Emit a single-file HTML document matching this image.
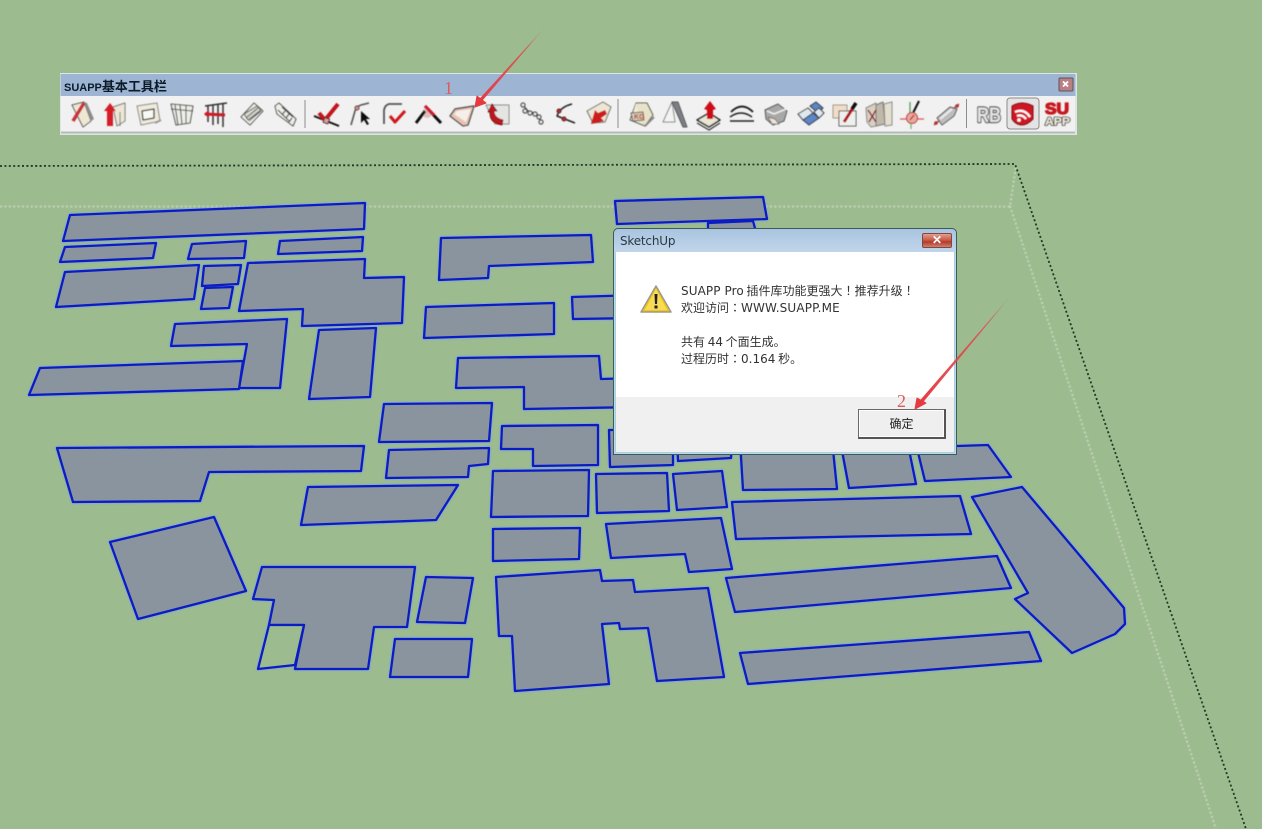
<!DOCTYPE html>
<html><head><meta charset="utf-8">
<style>
html,body{margin:0;padding:0;background:#9cbb8f;}
body{width:1262px;height:829px;position:relative;overflow:hidden;font-family:"Liberation Sans","Noto Sans CJK SC",sans-serif;}
svg{position:absolute;left:0;top:0;}
.t{position:absolute;white-space:nowrap;}
#dlg{position:absolute;left:613px;top:228px;width:344px;height:227px;box-sizing:border-box;border:1px solid #3c5a5c;border-radius:5px 5px 0 0;background:linear-gradient(#a9c4e0,#c2d6ea 24px);overflow:hidden;}
#dlg .in{position:absolute;left:1px;right:1px;top:23px;bottom:1px;background:#fff;border:1px solid #9fd4e0;border-top:0;box-sizing:border-box;}
#dlg .ft{position:absolute;left:0;right:0;top:145px;bottom:0;background:#f0f0f0;}
#dlg .x{position:absolute;left:308px;top:4px;width:30px;height:15px;box-sizing:border-box;border:1px solid #7b4a45;border-radius:2px;background:linear-gradient(#e0a090,#c8543f 50%,#b23a2a 60%,#d08070);color:#fff;font:bold 12px/13px "Liberation Sans",sans-serif;text-align:center;}
#btn{position:absolute;left:858px;top:409px;width:88px;height:30px;box-sizing:border-box;border:1px solid #6a6a6a;border-right:2px solid #555;border-bottom:2px solid #555;background:#efefef;box-shadow:inset 0 0 0 1px #fdfdfd;text-align:center;font:12px/27px "Noto Sans CJK SC",sans-serif;color:#222;}
.m{font:12px/17px "Noto Sans CJK SC",sans-serif;color:#333;left:681px;}
.m b{font:12px/17px "DejaVu Sans",sans-serif;}
.m i{font:12px/17px "Noto Sans CJK TC",sans-serif;}
</style></head><body>

<svg width="1262" height="829" viewBox="0 0 1262 829">
<defs>
<filter id="b"><feGaussianBlur stdDeviation=".45"/></filter>
<linearGradient id="a1" gradientUnits="userSpaceOnUse" x1="546" y1="26" x2="476" y2="107"><stop offset="0" stop-color="#e04a50" stop-opacity="0"/><stop offset=".25" stop-color="#e04a50" stop-opacity=".85"/><stop offset="1" stop-color="#e53a40"/></linearGradient>
<linearGradient id="a2" gradientUnits="userSpaceOnUse" x1="1014" y1="292" x2="916" y2="408"><stop offset="0" stop-color="#e04a50" stop-opacity="0"/><stop offset=".25" stop-color="#e04a50" stop-opacity=".85"/><stop offset="1" stop-color="#e53a40"/></linearGradient>
<g id="faces">
<path d="M70 215L365 203L364 229L63 241Z"/>
<path d="M65 247L156 243L153 258L60 262Z"/>
<path d="M192 244L246 241L244 258L188 259Z"/>
<path d="M280 241L363 237L362 251L278 254Z"/>
<path d="M65 272L199 265L194 299L56 307Z"/>
<path d="M204 266L241 265L238 284L202 286Z"/>
<path d="M205 288L233 287L229 308L201 309Z"/>
<path d="M248 263L365 259L364 278L404 277L402 323L302 326L303 309L239 311Z"/>
<path d="M175 324L287 319L280 388L239 388L247 344L171 346Z"/>
<path d="M40 368L243 361L239 389L29 395Z"/>
<path d="M319 330L376 328L370 397L309 399Z"/>
<path d="M708 223L753 221L756 232L708 232Z"/>
<path d="M615 201L763 197L767 219L617 224Z"/>
<path d="M441 238L591 235L593 262L489 266L488 278L439 280Z"/>
<path d="M426 307L554 303L554 334L424 338Z"/>
<path d="M572 297L640 295L640 318L573 319Z"/>
<path d="M458 358L599 356L601 379L640 378L640 407L524 409L524 387L456 388Z"/>
<path d="M384 404L492 403L489 441L379 442Z"/>
<path d="M502 426L598 425L598 465L533 466L533 449L501 449Z"/>
<path d="M389 450L489 448L488 464L469 466L468 477L386 478Z"/>
<path d="M493 471L589 470L588 516L491 517Z"/>
<path d="M596 474L667 473L669 511L597 513Z"/>
<path d="M673 474L722 471L727 507L677 510Z"/>
<path d="M609 430L673 430L673 465L610 467Z"/>
<path d="M677 440L732 440L731 458L678 461Z"/>
<path d="M57 448L364 446L361 471L209 472L200 501L73 502Z"/>
<path d="M308 487L458 485L436 520L301 525Z"/>
<path d="M110 542L214 517L246 591L138 619Z"/>
<path d="M262 567L415 567L407 627L374 627L368 669L295 669L304 625L269 625L274 600L253 599Z"/>
<path d="M269 625L258 669L295 665L304 625Z" fill="#9cbb8f"/>
<path d="M426 577L473 578L465 623L417 622Z"/>
<path d="M395 639L472 639L468 677L390 677Z"/>
<path d="M493 529L580 528L579 559L493 561Z"/>
<path d="M606 524L721 518L732 569L689 572L685 554L611 558Z"/>
<path d="M496 577L600 570L602 581L633 580L635 592L708 588L724 677L657 681L648 628L620 629L619 623L602 624L609 684L515 691L512 636L499 636Z"/>
<path d="M740 440L832 440L837 489L743 490Z"/>
<path d="M840 440L907 440L916 484L849 488Z"/>
<path d="M915 440L957 446L988 445L1011 477L925 481Z"/>
<path d="M732 502L960 496L971 534L736 539Z"/>
<path d="M972 497L1022 487L1124 608L1125 624L1115 634L1072 653L1015 599L1028 593Z"/>
<path d="M726 578L997 556L1011 588L735 612Z"/>
<path d="M740 653L1029 632L1041 661L748 684Z"/>
</g>
</defs>

<!-- guide lines -->
<g fill="none" stroke-linecap="butt">
<path d="M0 206.5 H1010 L1016 166 M1010 206 L1216 829" stroke="#c6d6bb" stroke-width="2" stroke-dasharray="2 2.4" filter="url(#b)"/>
<path d="M0 166 L1015 164 L1246 829" stroke="#1e3a26" stroke-width="1.800" stroke-dasharray="2 2.4"/>
</g>

<!-- building faces -->
<g fill="#8a949e" stroke="#7f9fe6" stroke-width="4.500" stroke-linejoin="round" opacity=".55" filter="url(#b)"><use href="#faces"/></g>
<g fill="#8a949e" stroke="#0a1cc4" stroke-width="2.300" stroke-linejoin="round"><use href="#faces"/></g>

<!-- toolbar -->
<rect x="60" y="73" width="1017" height="62" fill="#dfe4e4"/>
<rect x="60.5" y="74" width="1015" height="22" fill="#9db5d2"/>
<rect x="61" y="96" width="1014" height="36" fill="#f1f1f1"/>
<rect x="61" y="131.500" width="1014" height="2" fill="#b6bbb9"/>
<rect x="1059" y="78" width="14" height="13" rx="1" fill="#b97f82" stroke="#5f5458"/>
<path d="M1063 81.500l5 5m0-5l-5 5" stroke="#fff" stroke-width="1.800"/>
<path d="M305 100V128M618 99V128M966.500 99V128" stroke="#8d8d8d" stroke-width="1"/>
<rect x="1007" y="98" width="32" height="31" rx="3" fill="#e4e4e4" stroke="#8b8b8b"/>

<g filter="url(#b)" stroke-linejoin="round">
<!-- 1 -->
<g transform="translate(81,114)"><path d="M-9-9L3-12L10 7L2 13Z" fill="#eee7d2" stroke="#555" stroke-width="1"/><path d="M3-12L10 7L13 5L6-11Z" fill="#8c8c8c"/><path d="M-8 7L3-11" stroke="#c8323c" stroke-width="3.500"/></g>
<!-- 2 -->
<g transform="translate(115,114)"><path d="M-2-7L10-11V7L2 12Z" fill="#ece6d6" stroke="#777"/><path d="M5-2V12" stroke="#777"/><path d="M-5-11L-11-3H-8V12H-2V-3H1Z" fill="#d61f26"/></g>
<!-- 3 -->
<g transform="translate(148,114)"><path d="M-11-8L9-11L12 7L-7 11Z" fill="#efeada" stroke="#888"/><path d="M-6-3L6-5V4L-5 6Z" fill="#f8f8f4" stroke="#333" stroke-width="1.300"/><path d="M7 9L13 6" stroke="#999" stroke-width="2"/></g>
<!-- 4 -->
<g transform="translate(182,114)" fill="none" stroke="#555" stroke-width="1.100"><path d="M-11-10L11-8L8 9L-6 11Z" fill="#eeeee8"/><path d="M-11-5L11-3M-7-9L-4 11M-2-9L0 10M4-9L4 10"/></g>
<!-- 5 -->
<g transform="translate(216,114)" fill="none"><path d="M-11-8L11-11M-8-8V8M-3-9V11M2-10V10M7-10V13" stroke="#333" stroke-width="1.500"/><path d="M-11 0L9 1" stroke="#c81e28" stroke-width="3"/><path d="M-12 0L-7-4V4Z" fill="#c81e28"/></g>
<!-- 6 -->
<g transform="translate(251,114)" fill="#efefe8" stroke="#555"><path d="M-10 3L3-11L12-3L-1 11Z"/><path d="M-7 0L6-8L10-4L-3 6Z" fill="#d8d8d0"/><path d="M-5 4L7-6M-2 7L10-3" fill="none"/></g>
<!-- 7 -->
<g transform="translate(285,114)" fill="none" stroke="#444"><path d="M-10-8L-6-11L11 5L8 12L-8 0Z" fill="#efefea"/><path d="M-7-4L4 7M-3-7L8 3M-3 1L0-3M1 4L4 0M4 8L7 4" stroke-width="1.200"/></g>
<!-- 8 -->
<g transform="translate(326,114)" fill="none"><path d="M-12 2L13 12" stroke="#111" stroke-width="1.800"/><path d="M-7-1L-1 6L12-10" stroke="#c1191f" stroke-width="4"/><rect x="-2" y="4" width="5" height="5" fill="#d79f9f" stroke="#602020" transform="rotate(20 0 6)"/></g>
<!-- 9 -->
<g transform="translate(360,114)" fill="none"><path d="M-9 11L-5-3Q-3-8 1-9L9-11" stroke="#555" stroke-width="1.600"/><circle cx="-3" cy="-6" r="2" fill="#c99" stroke="#633"/><path d="M1-3V9L4 6L7 11L9 10L6 5L10 5Z" fill="#111"/></g>
<!-- 10 -->
<g transform="translate(394,114)" fill="none"><path d="M-10 10V-4Q-9-9-5-10H8" stroke="#555" stroke-width="1.800"/><path d="M-4 2L1 8L11-3" stroke="#d0141c" stroke-width="3"/></g>
<!-- 11 -->
<g transform="translate(428,114)" fill="none"><circle cx="-1" cy="-1" r="5" fill="#e3bcbc"/><path d="M-12 9L-3-3" stroke="#111" stroke-width="3"/><path d="M-3-8L13 9" stroke="#111" stroke-width="3"/><path d="M-3-8L6 1" stroke="#d4142a" stroke-width="3"/></g>
<!-- 12 -->
<g transform="translate(462,115)"><path d="M-12 1L-7-6L12-9L6 10L1 11Z" fill="#e8c3b4" stroke="#555" stroke-width="1.400"/><path d="M-8-1L-5-4L9-6L4 7Z" fill="#f6efe9"/></g>
<!-- 13 -->
<g transform="translate(497,114)"><path d="M-11-9H12V10H-2Z" fill="#e4e4e0" stroke="#888"/><path d="M-9-2L-5-10L0-3H-3Q-3 4 6 6L5 11Q-8 9-7-2Z" fill="#c0131c" stroke="#600" stroke-width=".7"/></g>
<!-- 14 -->
<g transform="translate(531,114)" fill="#eee" stroke="#444" stroke-width="1.200"><path d="M-8-9L-3-3L6 0L10 7" fill="none"/><circle cx="-8" cy="-9" r="2"/><circle cx="-6" cy="-3" r="2"/><circle cx="-1" cy="-1" r="2"/><circle cx="4" cy="0" r="2"/><circle cx="8" cy="3" r="2"/><circle cx="10" cy="8" r="2"/></g>
<!-- 15 -->
<g transform="translate(565,114)" fill="none"><path d="M7-10Q-5-7-8 2L10 9" stroke="#222" stroke-width="1.500"/><circle cx="-6" cy="-3" r="2" fill="#a33" stroke="#622"/><circle cx="-1" cy="5" r="2" fill="#a33" stroke="#622"/></g>
<!-- 16 -->
<g transform="translate(599,114)"><path d="M-12-3L4-12L12-7L6 8L-6 9Z" fill="#ede6d4" stroke="#666"/><path d="M6-4L-1-1L-4-4L-8 10L5 7L2 4L8 0Z" fill="#cc1a1c"/></g>
<!-- 17 -->
<g transform="translate(641,114)"><path d="M-5-11H6L12 1L4 12L-11 6Z" fill="#e8e2c8" stroke="#555"/><path d="M-9 3L-5-11L-2 5Z" fill="#f2ecd6"/><path d="M-10-1L2-2L3 6L-8 7Z" fill="#d6d0b8" stroke="#666"/><text x="-7" y="5" font-size="7" font-weight="bold" fill="#c01818" font-family="Liberation Sans">KG</text><path d="M4 12L13 3" stroke="#888" stroke-width="2"/></g>
<!-- 18 -->
<g transform="translate(675,114)"><path d="M-12 8L-3-12L0 8Z" fill="#f3f3f3" stroke="#888"/><path d="M-3-12L3-12L12 13L8 13Z" fill="#7b8086" stroke="#555"/></g>
<!-- 19 -->
<g transform="translate(709,115)"><path d="M-12 5L0-2L11 5L0 12Z" fill="#eae6d4" stroke="#222" stroke-width="1.500"/><path d="M-12 8L0 15L11 8" fill="none" stroke="#333" stroke-width="1.200"/><path d="M1-14L-5-6L-2-5V4H4V-5L7-6Z" fill="#cc1016"/></g>
<!-- 20 -->
<g transform="translate(742,114)" fill="none"><path d="M-11-2Q0-13 11-2" stroke="#222" stroke-width="1.800"/><path d="M-12 7H12M-12 3Q-1-5 10 3" stroke="#222" stroke-width="1.500"/></g>
<!-- 21 -->
<g transform="translate(776,114)"><path d="M-11-4L2-10L11-3L8 7L-3 11L-10 5Z" fill="#a8a8a8" stroke="#555"/><path d="M-9-3L-2 0L10-5" fill="none" stroke="#eee" stroke-width="1.500"/><path d="M-8 3L-1 5L3 10L-4 10Z" fill="#f0e4d6" stroke="#777"/></g>
<!-- 22 -->
<g transform="translate(811,114)" stroke="#333"><path d="M-13 0L-3-6L2-1L-8 6Z" fill="#dfe7ef"/><path d="M-1-8L5-12L12-6L7-1Z" fill="#5b86c8"/><path d="M-8 6L2-1L8 4L-2 11Z" fill="#5b86c8"/><path d="M3-2L8-6L13-1L8 4Z" fill="#dfe7ef"/></g>
<!-- 23 -->
<g transform="translate(845,114)"><rect x="-12" y="-9" width="14" height="13" fill="#f0dcc8" stroke="#998"/><rect x="-6" y="-3" width="17" height="15" fill="#eef0ee" stroke="#555"/><path d="M-1 8L8-6" stroke="#b01018" stroke-width="3"/><path d="M7-5L11-11" stroke="#111" stroke-width="3.500"/></g>
<!-- 24 -->
<g transform="translate(879,114)"><path d="M-13-6L-3-11V12L-8 13L-12 8Z" fill="#d8d0c0" stroke="#888"/><path d="M-3-9L4-12L6 10L-3 12Z" fill="#c0b8a8" stroke="#777"/><path d="M5-10L13-12V11L6 12Z" fill="#e4dece" stroke="#888"/><path d="M-11-4L-3 8M-3-4L-10 8" stroke="#8a2a3a" stroke-width="1.500"/></g>
<!-- 25 -->
<g transform="translate(912,115)" fill="none"><path d="M-12 4H12" stroke="#e05555" stroke-width="1.300"/><path d="M-1 8V14" stroke="#6dbb6d" stroke-width="1.300"/><path d="M0 0L7-14" stroke="#111" stroke-width="2"/><path d="M-2-13V-1" stroke="#5a9a5a" stroke-width="1.300"/><circle cx="0" cy="3" r="5.500" fill="#e8a8a0" stroke="#b84838"/><path d="M-2 5L2 0" stroke="#b02020" stroke-width="1.200"/></g>
<!-- 26 -->
<g transform="translate(947,115)"><path d="M-13 10L12-11" stroke="#d24048" stroke-width="1.500"/><path d="M-10 3L3-8L10-6L7 1L-5 10Z" fill="#bdbdbd" stroke="#555"/><path d="M-7 4L5-6" stroke="#eee" stroke-width="2"/><circle cx="10" cy="-9" r="1.800" fill="#a33"/><circle cx="-11" cy="8" r="1.800" fill="#a33"/></g>
<!-- 27 RB -->
<text x="977" y="122" font-family="Liberation Sans" font-weight="bold" font-size="21" fill="#e4e4e4" stroke="#4a4a4a" stroke-width="2.200" paint-order="stroke" textLength="24" lengthAdjust="spacingAndGlyphs">RB</text>
<!-- 28 -->
<g transform="translate(1022,114)"><path d="M-10-8Q0-14 11-8V5Q5 11 0 11Q-6 11-10 5Z" fill="#d01820" stroke="#7a1014"/><path d="M-7-2Q2-6 8 3M-5 2Q0 0 4 5" fill="none" stroke="#fff" stroke-width="2.200"/><circle cx="-3" cy="6" r="1.800" fill="#fff"/></g>
<!-- 29 SU APP -->
<text x="1045" y="114" font-family="Liberation Sans" font-weight="bold" font-size="16" fill="#c8141c" stroke="#c8141c" stroke-width="1.300" textLength="24" lengthAdjust="spacingAndGlyphs">SU</text>
<text x="1045" y="125" font-family="Liberation Sans" font-weight="bold" font-size="11" fill="#f4f0e0" stroke="#444" stroke-width="1.800" paint-order="stroke" textLength="25" lengthAdjust="spacingAndGlyphs">APP</text>
</g>
</svg>

<div class="t" style="left:64px;top:78px;font:bold 11px/15px 'Liberation Sans',sans-serif;color:#0c1a2a;">SUAPP<span style="font:bold 13px/15px 'Noto Sans CJK SC',sans-serif;">基本工具栏</span></div>

<!-- dialog -->
<div id="dlg">
<div class="in"><div class="ft"></div></div>
<div class="x">✕</div>
</div>
<div class="t" style="left:620px;top:233px;font:12px/16px 'DejaVu Sans',sans-serif;color:#2a3a44;letter-spacing:-.2px;">SketchUp</div>
<div class="t m" style="top:282px;"><b style="letter-spacing:.1px;">SUAPP Pro</b> 插件库功能更强大<i>！</i>推荐升级<i>！</i></div>
<div class="t m" style="top:299px;">欢迎访问<i>：</i><b style="letter-spacing:.15px;">WWW.SUAPP.ME</b></div>
<div class="t m" style="top:333px;">共有 <b>44</b> 个面生成。</div>
<div class="t m" style="top:350px;">过程历时<i>：</i><b>0.164</b> 秒。</div>
<svg width="1262" height="829" viewBox="0 0 1262 829" style="pointer-events:none">
<path d="M656 286L671 312H641Z" fill="#f2c51e" stroke="#9a9a88" stroke-width="1.500" stroke-linejoin="round"/>
<path d="M656 289L667 310H645Z" fill="#f8dc54"/>
<path d="M654.500 294H657.500L657 304H655ZM654.500 305.500H657.500V308.500H654.500Z" fill="#222"/>
</svg>
<div id="btn">确定</div>

<!-- annotations -->
<svg width="1262" height="829" viewBox="0 0 1262 829" style="pointer-events:none">
<path d="M546 26L479.800 103.800L477.200 101.200Z" fill="url(#a1)"/>
<path d="M475 107L477 96L486 103Z" fill="#e53a40" stroke="#e53a40" stroke-linejoin="round"/>
<path d="M1014 292L922.300 403.300L919.700 400.700Z" fill="url(#a2)"/>
<path d="M915 409L917 398L926 403Z" fill="#e53a40" stroke="#e53a40" stroke-linejoin="round"/>
<text x="444" y="94" font-family="Liberation Serif" font-size="18" fill="#dc5a5c">1</text>
<text x="897" y="407" font-family="Liberation Serif" font-size="18" fill="#dc5a5c">2</text>
</svg>
</body></html>
